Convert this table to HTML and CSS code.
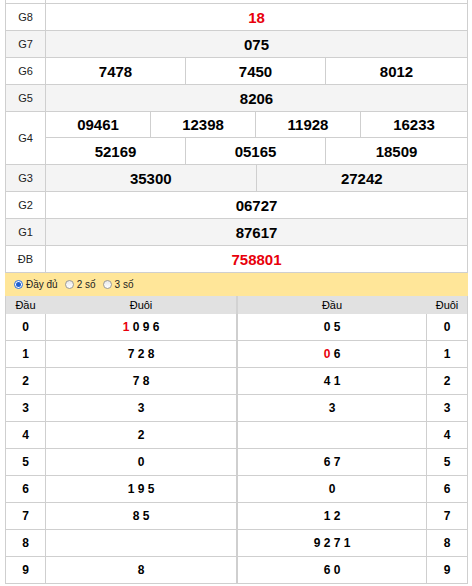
FILE: index.html
```html
<!DOCTYPE html>
<html>
<head>
<meta charset="utf-8">
<link rel="stylesheet" href="styles.css">
</head>
<body>
<div class="wrap">
  <div class="results">
    <div class="row top"><div class="lbl"></div><div class="val"></div></div>
    <div class="row"><div class="lbl">G8</div><div class="val red">18</div></div>
    <div class="row alt"><div class="lbl">G7</div><div class="val">075</div></div>
    <div class="row"><div class="lbl">G6</div><div class="val split3"><span>7478</span><span>7450</span><span>8012</span></div></div>
    <div class="row alt"><div class="lbl">G5</div><div class="val">8206</div></div>
    <div class="row"><div class="lbl tall">G4</div>
      <div class="stack">
        <div class="val split4"><span>09461</span><span>12398</span><span>11928</span><span>16233</span></div>
        <div class="val split3"><span>52169</span><span>05165</span><span>18509</span></div>
      </div>
    </div>
    <div class="row alt"><div class="lbl">G3</div><div class="val split2"><span>35300</span><span>27242</span></div></div>
    <div class="row"><div class="lbl">G2</div><div class="val">06727</div></div>
    <div class="row alt"><div class="lbl">G1</div><div class="val">87617</div></div>
    <div class="row"><div class="lbl">ĐB</div><div class="val red">758801</div></div>
  </div>

  <div class="options">
    <label class="opt"><span class="radio on"></span>Đầy đủ</label>
    <label class="opt"><span class="radio"></span>2 số</label>
    <label class="opt"><span class="radio"></span>3 số</label>
  </div>

  <div class="lt">
    <div class="lt-row head"><div>Đầu</div><div>Đuôi</div><div>Đầu</div><div>Đuôi</div></div>
    <div class="lt-row"><div>0</div><div><b class="red">1</b> 0 9 6</div><div>0 5</div><div>0</div></div>
    <div class="lt-row"><div>1</div><div>7 2 8</div><div><b class="red">0</b> 6</div><div>1</div></div>
    <div class="lt-row"><div>2</div><div>7 8</div><div>4 1</div><div>2</div></div>
    <div class="lt-row"><div>3</div><div>3</div><div>3</div><div>3</div></div>
    <div class="lt-row"><div>4</div><div>2</div><div></div><div>4</div></div>
    <div class="lt-row"><div>5</div><div>0</div><div>6 7</div><div>5</div></div>
    <div class="lt-row"><div>6</div><div>1 9 5</div><div>0</div><div>6</div></div>
    <div class="lt-row"><div>7</div><div>8 5</div><div>1 2</div><div>7</div></div>
    <div class="lt-row"><div>8</div><div></div><div>9 2 7 1</div><div>8</div></div>
    <div class="lt-row"><div>9</div><div>8</div><div>6 0</div><div>9</div></div>
  </div>
</div>
</body>
</html>
```

FILE: styles.css
```css
* { box-sizing: border-box; }
html, body { margin: 0; padding: 0; background: #fff; }
body {
  font-family: "Liberation Sans", Arial, sans-serif;
  color: #000;
  width: 472px;
  height: 586px;
  overflow: hidden;
}
.wrap {
  margin-left: 5px;
  width: 463px;
}
.results {
  border-left: 1px solid #cfcfcf;
  border-right: 1px solid #cfcfcf;
}
.row {
  display: grid;
  grid-template-columns: 40px 1fr;
  border-bottom: 1px solid #cfcfcf;
}
.row.top { height: 4px; }
.row.alt { background: #f4f4f4; }
.lbl {
  border-right: 1px solid #cfcfcf;
  font-size: 11px;
  color: #222;
  display: flex;
  align-items: center;
  justify-content: center;
}
.val {
  height: 26px;
  display: flex;
  align-items: center;
  justify-content: center;
  font-size: 15px;
  font-weight: bold;
}
.red { color: #e8000b; }
.split2, .split3, .split4 {
  display: grid;
  align-items: stretch;
}
.split2 { grid-template-columns: 1fr 1fr; }
.split3 { grid-template-columns: 140px 140px 1fr; }
.split4 { grid-template-columns: 105px 105px 105px 1fr; }
.split2 span, .split3 span, .split4 span {
  display: flex;
  align-items: center;
  justify-content: center;
  border-right: 1px solid #cfcfcf;
}
.split2 span:last-child, .split3 span:last-child, .split4 span:last-child { border-right: none; }
.stack .val:first-child { border-bottom: 1px solid #cfcfcf; }

.options {
  height: 23px;
  background: #ffe699;
  display: flex;
  align-items: center;
  padding-left: 9px;
  gap: 7px;
  font-size: 10px;
  color: #222;
}
.opt { display: flex; align-items: center; }
.radio {
  width: 9px;
  height: 9px;
  border-radius: 50%;
  border: 1px solid #9a9a9a;
  background: linear-gradient(#e8e8e8, #fff);
  margin-right: 3px;
  position: relative;
}
.radio.on {
  border-color: #2b6cd8;
  background: #fff;
}
.radio.on::after {
  content: "";
  position: absolute;
  left: 1px; top: 1px;
  width: 5px; height: 5px;
  border-radius: 50%;
  background: #1f5fd0;
}

.lt {
  border-left: 1px solid #cfcfcf;
  border-right: 1px solid #cfcfcf;
}
.lt-row {
  display: grid;
  grid-template-columns: 40px 192px 1fr 40px;
  border-bottom: 1px solid #cfcfcf;
  font-size: 12px;
  font-weight: bold;
}
.lt-row > div {
  height: 26px;
  display: flex;
  align-items: center;
  justify-content: center;
  border-right: 1px solid #cfcfcf;
  white-space: pre;
}
.lt-row > div:nth-child(2) { border-right-width: 2px; }
.lt-row > div:last-child { border-right: none; }
.lt-row.head {
  background: #e1e1e1;
  border-bottom: none;
  font-weight: normal;
  font-size: 11px;
}
.lt-row.head > div { height: 18px; border-right-color: #d2d2d2; }
.lt-row.head > div:first-child { border-right-color: transparent; }
.lt-row.head > div:nth-child(3) { border-right-color: transparent; }
b.red { font-weight: bold; }
```
